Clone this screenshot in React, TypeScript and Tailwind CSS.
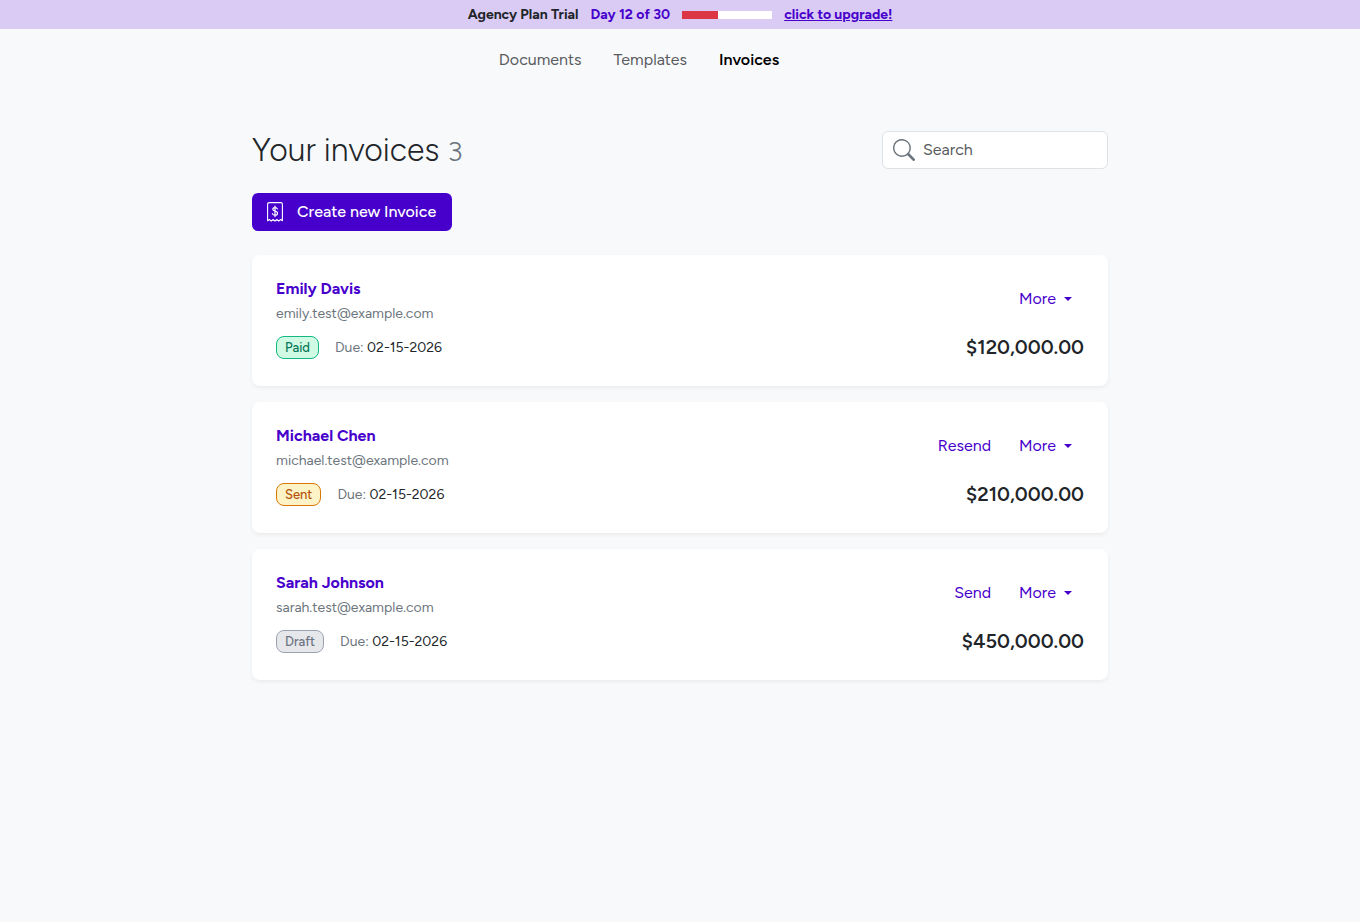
import { useState } from "react";
import { BsSearch } from "react-icons/bs";

type Status = "Paid" | "Sent" | "Draft";

type Invoice = {
  name: string;
  email: string;
  status: Status;
  due: string;
  amount: string;
  action?: string;
};

const INVOICES: Invoice[] = [
  { name: "Emily Davis", email: "emily.test@example.com", status: "Paid", due: "02-15-2026", amount: "$120,000.00" },
  {
    name: "Michael Chen",
    email: "michael.test@example.com",
    status: "Sent",
    due: "02-15-2026",
    amount: "$210,000.00",
    action: "Resend",
  },
  {
    name: "Sarah Johnson",
    email: "sarah.test@example.com",
    status: "Draft",
    due: "02-15-2026",
    amount: "$450,000.00",
    action: "Send",
  },
];

const BADGES: Record<Status, string> = {
  Paid: "border-[#10b981] bg-[#d1fae5] text-[#047857]",
  Sent: "border-[#d97706] bg-[#fef3c7] text-[#b45309]",
  Draft: "border-[#9ca3af] bg-[#e5e7eb] text-[#6b7280]",
};

const NAV = ["Documents", "Templates", "Invoices"];

function InvoiceIcon() {
  return (
    <svg width="16" height="20" viewBox="0 0 16 20" fill="none" stroke="currentColor" aria-hidden="true">
      <path
        d="M.6 18.8V2.2Q.6.6 2.2.6h11.6q1.6 0 1.6 1.6v16.6l-1.9-1.3-1.8 1.6-1.8-1.6L8 19.1l-1.9-1.6-1.8 1.6-1.8-1.6z"
        strokeWidth="1.1"
        strokeLinejoin="round"
      />
      <path
        d="M10.4 6.9Q9.9 5.6 8 5.6q-2.2 0-2.2 1.7 0 1.5 2.2 1.9 2.5.5 2.5 2.2 0 1.8-2.5 1.8-2.1 0-2.6-1.6M8 4v10.6"
        strokeWidth="1.2"
        strokeLinecap="round"
      />
    </svg>
  );
}

function TrialBanner({ day, total }: { day: number; total: number }) {
  return (
    <div className="flex items-center justify-center gap-3 bg-[#dacbf4] py-1 text-sm font-bold leading-[21px]">
      <span>Agency Plan Trial</span>
      <span className="text-[#4700cc]">
        Day {day} of {total}
      </span>
      <div className="h-2 w-[90px] bg-white">
        <div className="h-full bg-[#dc3545]" style={{ width: `${(day / total) * 100}%` }} />
      </div>
      <a href="#upgrade" className="text-[#4700cc] underline">
        click to upgrade!
      </a>
    </div>
  );
}

function InvoiceCard({ invoice }: { invoice: Invoice }) {
  return (
    <li className="flex justify-between rounded-lg bg-white p-6 shadow-[0_2px_4px_rgba(0,0,0,0.06)]">
      <div>
        <a href="#invoice" className="block font-bold leading-5 text-[#4700cc]">
          {invoice.name}
        </a>
        <p className="mt-[5px] text-sm leading-5 text-[#6c757d]">{invoice.email}</p>
        <div className="mt-3 flex items-baseline gap-4 pb-[3px] text-sm leading-5">
          <span className={`rounded-lg border px-2 text-[13px] font-medium leading-[21px] ${BADGES[invoice.status]}`}>
            {invoice.status}
          </span>
          <span>
            <span className="text-[#6c757d]">Due:</span> {invoice.due}
          </span>
        </div>
      </div>
      <div className="flex flex-col items-end justify-between">
        <div className="flex gap-1 text-[#4700cc]">
          {invoice.action && (
            <button type="button" className="px-3 py-2 leading-6">
              {invoice.action}
            </button>
          )}
          <button type="button" className="flex items-center gap-2 px-3 py-2 leading-6">
            More
            <svg width="8" height="4" viewBox="0 0 8 4" fill="currentColor" aria-hidden="true">
              <path d="M0 0h8L4 4z" />
            </svg>
          </button>
        </div>
        <p className="text-xl font-semibold leading-[30px]">{invoice.amount}</p>
      </div>
    </li>
  );
}

export default function App() {
  const [query, setQuery] = useState("");
  const shown = INVOICES.filter((i) => i.name.toLowerCase().includes(query.toLowerCase()));

  return (
    <div className="min-h-screen bg-[#f8f9fb] font-['Figtree','Inter',sans-serif] text-base text-[#212529]">
      <TrialBanner day={12} total={30} />

      <nav className="mx-auto flex max-w-[856px] justify-center gap-8 pt-[19px] pr-[82px] leading-6">
        {NAV.map((item) => (
          <a
            key={item}
            href={`#${item.toLowerCase()}`}
            className={item === "Invoices" ? "font-semibold text-black" : "text-[#595b5e]"}
          >
            {item}
          </a>
        ))}
      </nav>

      <main className="mx-auto max-w-[856px] pt-[59px] pb-6">
        <div className="flex h-[38px] items-center justify-between">
          <h1 className="text-[32px] font-light leading-10">
            Your invoices <span className="text-[28px] text-[#6c757d]">{INVOICES.length}</span>
          </h1>
          <label className="flex h-[38px] w-[226px] items-center gap-2 rounded-md border border-[#dee2e6] bg-white px-[10px] text-[#6c757d]">
            <BsSearch size={22} className="shrink-0" aria-hidden="true" />
            <input
              type="search"
              aria-label="Search"
              placeholder="Search"
              value={query}
              onChange={(e) => setQuery(e.target.value)}
              className="w-full min-w-0 text-[#212529] outline-none placeholder:text-[#595c5f]"
            />
          </label>
        </div>

        <button
          type="button"
          className="mt-6 flex h-[38px] items-center gap-[14px] rounded-md bg-[#4700cc] pr-4 pl-[15px] font-medium text-white"
        >
          <InvoiceIcon />
          Create new Invoice
        </button>

        <ul className="mt-6 flex flex-col gap-4">
          {shown.map((invoice) => (
            <InvoiceCard key={invoice.email} invoice={invoice} />
          ))}
        </ul>
      </main>
    </div>
  );
}
